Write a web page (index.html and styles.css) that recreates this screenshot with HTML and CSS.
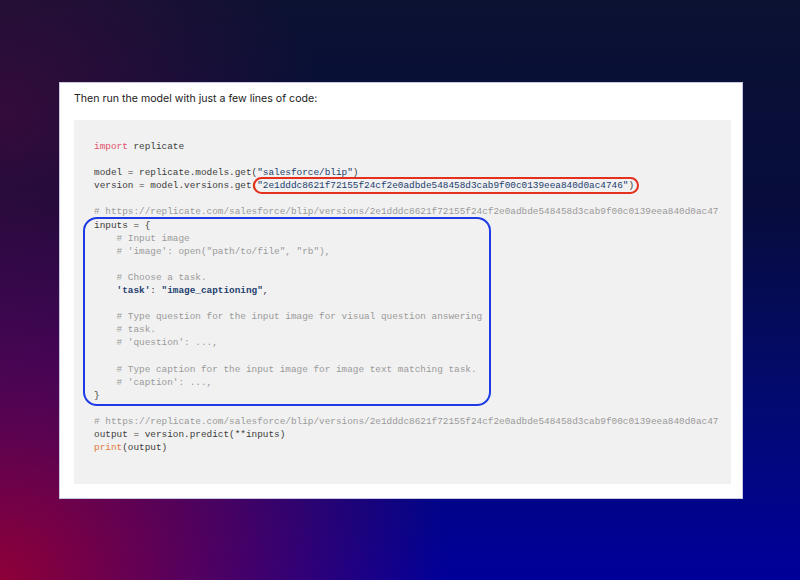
FILE: index.html
```html
<!DOCTYPE html>
<html>
<head>
<meta charset="utf-8">
<link rel="stylesheet" href="styles.css">
</head>
<body>
<div class="card">
  <p class="lead">Then run the model with just a few lines of code:</p>
  <div class="code">
<pre><span class="kw">import</span> replicate

model = replicate.models.get(<span class="str">"salesforce/blip"</span>)
version = model.versions.get(<span class="str">"2e1dddc8621f72155f24cf2e0adbde548458d3cab9f00c0139eea840d0ac4746"</span>)

<span class="cm"># https://replicate.com/salesforce/blip/versions/2e1dddc8621f72155f24cf2e0adbde548458d3cab9f00c0139eea840d0ac47</span>
inputs = {
    <span class="cm"># Input image</span>
    <span class="cm"># 'image': open("path/to/file", "rb"),</span>

    <span class="cm"># Choose a task.</span>
    <span class="str b">'task'</span>: <span class="str b">"image_captioning"</span>,

    <span class="cm"># Type question for the input image for visual question answering</span>
    <span class="cm"># task.</span>
    <span class="cm"># 'question': ...,</span>

    <span class="cm"># Type caption for the input image for image text matching task.</span>
    <span class="cm"># 'caption': ...,</span>
}

<span class="cm"># https://replicate.com/salesforce/blip/versions/2e1dddc8621f72155f24cf2e0adbde548458d3cab9f00c0139eea840d0ac47</span>
output = version.predict(**inputs)
<span class="fn">print</span>(output)</pre>
    <div class="mark mark-red"></div>
    <div class="mark mark-blue"></div>
  </div>
</div>
</body>
</html>
```

FILE: styles.css
```css
html, body {
  margin: 0;
  height: 100%;
}
body {
  width: 800px;
  height: 580px;
  overflow: hidden;
  box-sizing: border-box;
  padding: 82px 0 0 59px;
  background:
    radial-gradient(ellipse 70% 85% at 0% 100%, rgba(150, 0, 50, 0.95) 0%, rgba(120, 0, 70, 0.55) 45%, rgba(80, 0, 80, 0) 80%),
    radial-gradient(ellipse 40% 50% at 0% 20%, rgba(70, 10, 60, 0.7) 0%, rgba(40, 10, 50, 0) 100%),
    linear-gradient(180deg, #0b1232 0%, #070c3c 35%, #020a72 70%, #00009a 100%);
}
.card {
  width: 684px;
  height: 417px;
  box-sizing: border-box;
  background: #ffffff;
  border: 1px solid #c9c6e2;
  padding: 8px 11px 14px 14px;
  display: flex;
  flex-direction: column;
}
.lead {
  margin: 0;
  font-family: "Inter", "Liberation Sans", sans-serif;
  font-size: 10.6px;
  line-height: 15px;
  color: #222;
  height: 29px;
}
.code {
  position: relative;
  flex: 1;
  background: #f1f1f1;
  padding: 20px 0 0 20px;
  overflow: hidden;
}
pre {
  margin: 0;
  font-family: "Liberation Mono", "DejaVu Sans Mono", monospace;
  font-size: 9.4px;
  line-height: 13.1px;
  color: #3c3c3c;
  white-space: pre;
}
.kw { color: #e0506a; }
.fn { color: #e07a3a; }
.str { color: #23406e; }
.b { font-weight: bold; }
.cm { color: #9a9a9a; }
.mark {
  position: absolute;
  box-sizing: border-box;
}
.mark-red {
  left: 179px;
  top: 57px;
  width: 386px;
  height: 17px;
  border: 2.5px solid #e5301e;
  border-radius: 9px;
}
.mark-blue {
  left: 9px;
  top: 97px;
  width: 408px;
  height: 189px;
  border: 2.5px solid #1d3ae6;
  border-radius: 14px;
}
```
